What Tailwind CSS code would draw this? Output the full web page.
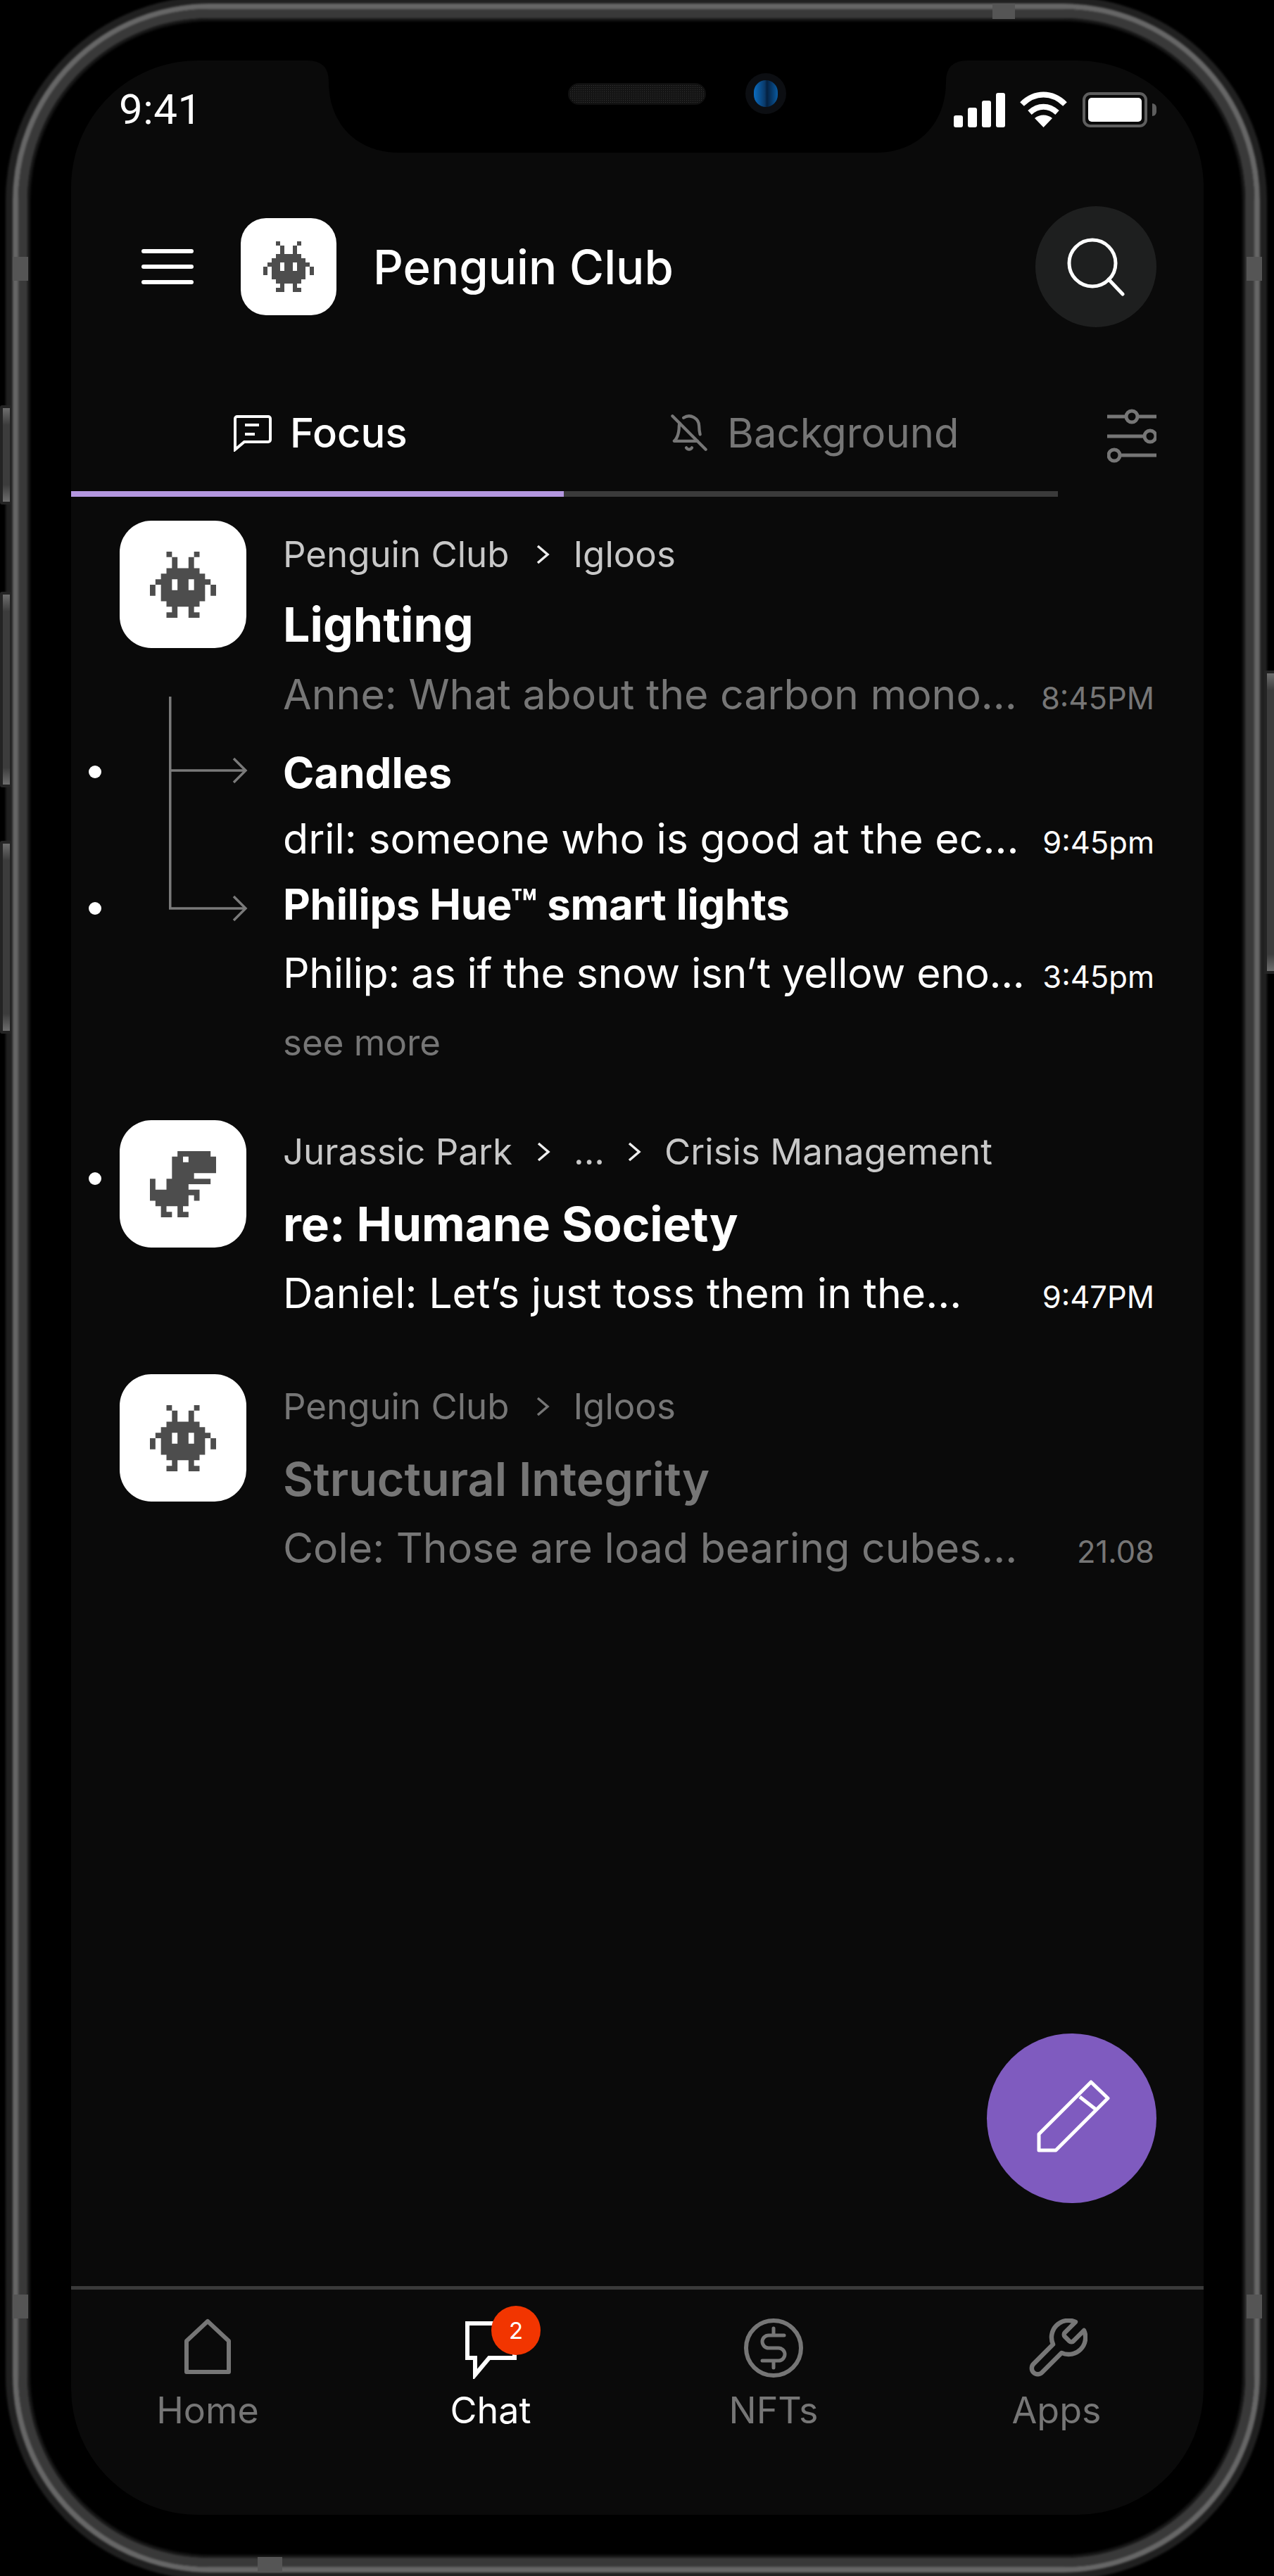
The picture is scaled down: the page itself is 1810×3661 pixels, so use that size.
<!DOCTYPE html>
<html lang="en">
<head>
  <meta charset="UTF-8">
  <title>Penguin Club</title>
  <script src="https://cdn.jsdelivr.net/npm/@tailwindcss/browser@4"></script>
</head>
<body class="bg-black">
  <!-- pixel icons -->
  <svg class="hidden">
    <symbol id="invader" viewBox="0 0 12 12">
      <path fill="#4d4d4d" d="M3 0h1v1H3zM8 0h1v1H8zM4 1h1v2H4zM7 1h1v2H7zM3 3h6v1H3zM2 4h8v1H2zM1 5h3v1H1zM5 5h2v1H5zM8 5h3v1H8zM0 6h1v2H0zM11 6h1v2h-1zM2 6h2v1H2zM5 6h2v1H5zM8 6h2v1H8zM2 7h8v1H2zM2 8h8v1H2zM3 9h6v1H3zM4 10h1v1H4zM7 10h1v1H7zM3 11h2v1H3zM7 11h2v1H7z"/>
    </symbol>
    <symbol id="dino" viewBox="0 0 12 12">
      <path fill="#4d4d4d" d="M5 0h6v1H5zM4 1h2v1H4zM7 1h5v1H7zM4 2h8v2H4zM4 4h4v1H4zM0 5h1v2H0zM3 5h8v1H3zM3 6h4v1H3zM0 7h9v1H0zM0 8h7v1H0zM8 8h1v1H8zM1 9h6v1H1zM2 10h1v1H2zM5 10h1v1H5zM2 11h2v1H2zM5 11h2v1H5z"/>
    </symbol>
  </svg>

  <div class="relative w-[1810px] h-[3661px] overflow-hidden font-['Inter',sans-serif]">

    <!-- phone frame -->
    <div class="absolute left-[8px] top-[-5px] w-[1792px] h-[3671px] rounded-[290px] border-[10px] border-[#202020] blur-[1.5px]">
      <div class="w-full h-full rounded-[280px] border-[8px] border-[#666666]">
        <div class="w-full h-full rounded-[272px] border-[13px] border-[#393939]">
          <div class="w-full h-full rounded-[259px] border-[4px] border-[#161616] bg-black"></div>
        </div>
      </div>
    </div>
    <!-- antenna bands -->
    <div class="absolute left-[1410px] top-[5px] w-[32px] h-[22px] bg-[#555555]"></div>
    <div class="absolute left-[366px] top-[3634px] w-[35px] h-[22px] bg-[#555555]"></div>
    <div class="absolute left-[18px] top-[365px] w-[22px] h-[34px] bg-[#555555]"></div>
    <div class="absolute left-[1771px] top-[365px] w-[22px] h-[34px] bg-[#555555]"></div>
    <div class="absolute left-[18px] top-[3261px] w-[22px] h-[34px] bg-[#555555]"></div>
    <div class="absolute left-[1771px] top-[3261px] w-[22px] h-[34px] bg-[#555555]"></div>
    <!-- side buttons -->
    <div class="absolute left-0 top-[576px] w-[16px] h-[141px] rounded-l-[3px] bg-[#242424] p-[4px] pr-[2px] blur-[0.5px]">
      <div class="w-full h-full bg-[linear-gradient(#6e6e6e,#3c3c3c_24px,#3c3c3c_calc(100%-24px),#6e6e6e)]"></div>
    </div>
    <div class="absolute left-0 top-[841px] w-[16px] h-[278px] rounded-l-[3px] bg-[#242424] p-[4px] pr-[2px] blur-[0.5px]">
      <div class="w-full h-full bg-[linear-gradient(#6e6e6e,#3c3c3c_24px,#3c3c3c_calc(100%-24px),#6e6e6e)]"></div>
    </div>
    <div class="absolute left-0 top-[1195px] w-[16px] h-[274px] rounded-l-[3px] bg-[#242424] p-[4px] pr-[2px] blur-[0.5px]">
      <div class="w-full h-full bg-[linear-gradient(#6e6e6e,#3c3c3c_24px,#3c3c3c_calc(100%-24px),#6e6e6e)]"></div>
    </div>
    <div class="absolute left-[1796px] top-[953px] w-[14px] h-[431px] bg-[#242424] p-[4px] pr-0 blur-[0.5px]">
      <div class="w-full h-full bg-[linear-gradient(#6e6e6e,#3c3c3c_24px,#3c3c3c_calc(100%-24px),#6e6e6e)]"></div>
    </div>

    <!-- screen -->
    <div class="absolute left-[101px] top-[86px] w-[1609px] h-[3488px] rounded-[180px] bg-[#0a0a0a] text-white flex flex-col">

      <!-- notch -->
      <svg class="absolute left-[336px] top-0" width="937" height="131" viewBox="0 0 937 131">
        <path fill="#000" d="M0 0Q30 0 30 30C30 90 70 131 130 131H807C867 131 907 90 907 30Q907 0 937 0Z"/>
      </svg>
      <div class="absolute left-[706px] top-[32px] w-[196px] h-[31px] rounded-full bg-[#141414] bg-[radial-gradient(#333333_1px,transparent_1px)] bg-size-[3px_3px] border-2 border-[#101010]"></div>
      <div class="absolute left-[958px] top-[18px] w-[58px] h-[58px] rounded-full bg-[#0c0e12] flex items-center justify-center">
        <div class="w-[34px] h-[38px] rounded-full bg-[linear-gradient(90deg,#0a6cc0,#0a3a6a_45%,#042040_55%,#0a5aa0)]"></div>
      </div>

      <!-- status bar -->
      <div class="relative h-[100px] shrink-0 flex items-start justify-between pl-[68px] pr-[67px]">
        <span class="text-[60px] leading-[72px] mt-[34px] font-['Roboto',sans-serif] tracking-[0.5px]">9:41</span>
        <div class="flex items-end mt-[44px]">
          <div class="flex items-end gap-[7px]">
            <div class="w-[13px] h-[17px] rounded-[3px] bg-white"></div>
            <div class="w-[13px] h-[28px] rounded-[3px] bg-white"></div>
            <div class="w-[13px] h-[38px] rounded-[3px] bg-white"></div>
            <div class="w-[13px] h-[49px] rounded-[3px] bg-white"></div>
          </div>
          <svg class="ml-[21px]" width="67" height="51" viewBox="0 0 67 51" fill="none" stroke="#fff" stroke-width="8">
            <path d="M3 18C21 0 46 0 64 18"/>
            <path d="M14 30C26 19 41 19 53 30"/>
            <path fill="#fff" stroke="none" d="M33.500 51L21 38C28 32 39 32 46 38Z"/>
          </svg>
          <div class="ml-[22px] w-[92px] h-[50px] rounded-[11px] border-[4px] border-[#5e5e5e] p-[4px]">
            <div class="w-full h-full rounded-[5px] bg-white"></div>
          </div>
          <div class="w-[6px] h-[18px] mb-[16px] ml-[7px] rounded-r-full bg-[#5e5e5e]"></div>
        </div>
      </div>

      <!-- app bar -->
      <div class="h-[279px] shrink-0 flex items-start pl-[100px] pr-[67px]">
        <div class="flex flex-col gap-[16px] mt-[168px] w-[74px]">
          <div class="h-[6px] rounded-full bg-white"></div>
          <div class="h-[6px] rounded-full bg-white"></div>
          <div class="h-[6px] rounded-full bg-white"></div>
        </div>
        <div class="ml-[67px] mt-[124px] w-[136px] h-[138px] rounded-[36px] bg-white flex items-center justify-center">
          <svg width="72" height="72"><use href="#invader"/></svg>
        </div>
        <div class="ml-[52px] mt-[154px] text-[67px] leading-[80px] font-[450]">Penguin Club</div>
        <div class="ml-auto mt-[107px] w-[172px] h-[172px] rounded-full bg-[#1e1f1f] flex items-center justify-center">
          <svg width="84" height="84" viewBox="0 0 84 84" fill="none" stroke="#fff" stroke-width="5" stroke-linecap="round">
            <circle cx="37" cy="37" r="33"/>
            <path d="M60 60L80 81"/>
          </svg>
        </div>
      </div>

      <!-- tabs -->
      <div class="h-[233px] shrink-0 flex items-start pr-[67px] pt-[115px]">
        <div class="w-[700px] pl-[230px] flex items-center gap-[25px]">
          <svg width="56" height="53" viewBox="0 0 56 53" fill="none" stroke="#fff" stroke-width="4">
            <path d="M3 6a3 3 0 0 1 3-3H50a3 3 0 0 1 3 3V36a3 3 0 0 1-3 3H16L3 50Z"/>
            <path d="M17 15H37M17 28H31"/>
          </svg>
          <span class="text-[58px] leading-[70px] font-[450]">Focus</span>
        </div>
        <div class="pl-[152px] flex items-center gap-[28px] text-[#767676]">
          <svg width="52" height="52" viewBox="1 1 22 22" fill="none" stroke="#767676" stroke-width="1.800" stroke-linecap="round" stroke-linejoin="round">
            <path d="M8.700 3A6 6 0 0 1 18 8a21.300 21.300 0 0 0 .6 5"/>
            <path d="M17 17H3s3-2 3-9a4.670 4.670 0 0 1 .3-1.700"/>
            <path d="M10.300 21a1.940 1.940 0 0 0 3.400 0"/>
            <path d="m2 2 20 20"/>
          </svg>
          <span class="text-[58px] leading-[70px]">Background</span>
        </div>
        <svg class="ml-auto mt-[1px]" width="70" height="78" viewBox="0 0 70 78" fill="#0a0a0a" stroke="#767676" stroke-width="5">
          <path d="M0 11H70M0 39H70M0 66H70"/>
          <circle cx="35" cy="11" r="8"/>
          <circle cx="61" cy="39" r="8"/>
          <circle cx="10" cy="66" r="8"/>
        </svg>
      </div>
      <div class="flex h-[8px] w-[1402px] shrink-0">
        <div class="w-[700px] bg-[#b497e0]"></div>
        <div class="flex-1 bg-[#3a3a3a]"></div>
      </div>

      <!-- chat list -->
      <div class="relative pt-[34px] pl-[69px] pr-[70px]">
        <!-- thread connector -->
        <svg class="absolute left-[139px] top-[284px]" width="112" height="320" viewBox="0 0 112 320" fill="none" stroke="#7a7a7a" stroke-width="3.500">
          <path d="M1.750 0V301H109"/>
          <path d="M1.750 105H109"/>
          <path d="M92 88L109 105L92 122"/>
          <path d="M92 284L109 301L92 318"/>
        </svg>
        <div class="absolute left-[25px] top-[382px] w-[18px] h-[18px] rounded-full bg-white"></div>
        <div class="absolute left-[25px] top-[576px] w-[18px] h-[18px] rounded-full bg-white"></div>
        <div class="absolute left-[25px] top-[960px] w-[18px] h-[18px] rounded-full bg-white"></div>

        <!-- Lighting -->
        <div class="flex gap-[52px]">
          <div class="w-[180px] h-[181px] shrink-0 rounded-[45px] bg-white flex items-center justify-center">
            <svg width="94" height="94"><use href="#invader"/></svg>
          </div>
          <div class="flex-1 pt-[18px]">
            <div class="flex items-center h-[60px] text-[51px] leading-[60px] text-[#c8c8c8]">
              <span>Penguin Club</span>
              <svg class="ml-[38px] mr-[33px]" width="20" height="30" viewBox="0 0 20 30" fill="none" stroke="#eeeeee" stroke-width="3.500"><path d="M3 3L17 15L3 27"/></svg>
              <span>Igloos</span>
            </div>
            <div class="mt-[29px] text-[68px] leading-[80px] font-bold">Lighting</div>
            <div class="mt-[24px] flex items-baseline justify-between text-[#767676]">
              <span class="text-[59px] leading-[72px]">Anne: What about the carbon mono...</span>
              <span class="text-[43.5px] leading-[44px]">8:45PM</span>
            </div>
            <div class="mt-[39px] text-[60px] leading-[72px] font-bold">Candles</div>
            <div class="mt-[22px] flex items-baseline justify-between">
              <span class="text-[59px] leading-[72px]">dril: someone who is good at the ec...</span>
              <span class="text-[43.5px] leading-[44px]">9:45pm</span>
            </div>
            <div class="mt-[21px] text-[60px] leading-[72px] font-bold tracking-[-0.3px]">Philips Hue™ smart lights</div>
            <div class="mt-[26px] flex items-baseline justify-between">
              <span class="text-[59px] leading-[72px] tracking-[-0.4px]">Philip: as if the snow isn’t yellow eno...</span>
              <span class="text-[43.5px] leading-[44px]">3:45pm</span>
            </div>
            <div class="mt-[33px] text-[51px] leading-[60px] text-[#767676]">see more</div>
          </div>
        </div>

        <!-- re: Humane Society -->
        <div class="mt-[80px] flex gap-[52px]">
          <div class="w-[180px] h-[181px] shrink-0 rounded-[45px] bg-white flex items-center justify-center">
            <svg width="94" height="94"><use href="#dino"/></svg>
          </div>
          <div class="flex-1 pt-[15px]">
            <div class="flex items-center h-[60px] text-[51px] leading-[60px] text-[#c8c8c8]">
              <span>Jurassic Park</span>
              <svg class="ml-[34px] mr-[33px]" width="20" height="30" viewBox="0 0 20 30" fill="none" stroke="#eeeeee" stroke-width="3.500"><path d="M3 3L17 15L3 27"/></svg>
              <span>...</span>
              <svg class="ml-[32px] mr-[33px]" width="20" height="30" viewBox="0 0 20 30" fill="none" stroke="#eeeeee" stroke-width="3.500"><path d="M3 3L17 15L3 27"/></svg>
              <span>Crisis Management</span>
            </div>
            <div class="mt-[33px] text-[67.500px] leading-[80px] font-bold">re: Humane Society</div>
            <div class="mt-[22px] flex items-baseline justify-between">
              <span class="text-[59px] leading-[72px]">Daniel: Let’s just toss them in the...</span>
              <span class="text-[43.5px] leading-[44px]">9:47PM</span>
            </div>
          </div>
        </div>

        <!-- Structural Integrity -->
        <div class="mt-[79px] flex gap-[52px]">
          <div class="w-[180px] h-[181px] shrink-0 rounded-[45px] bg-white flex items-center justify-center">
            <svg width="94" height="94"><use href="#invader"/></svg>
          </div>
          <div class="flex-1 pt-[16px] text-[#767676]">
            <div class="flex items-center h-[60px] text-[51px] leading-[60px]">
              <span>Penguin Club</span>
              <svg class="ml-[38px] mr-[33px]" width="20" height="30" viewBox="0 0 20 30" fill="none" stroke="#767676" stroke-width="3.500"><path d="M3 3L17 15L3 27"/></svg>
              <span>Igloos</span>
            </div>
            <div class="mt-[33px] text-[66.500px] leading-[80px] font-semibold">Structural Integrity</div>
            <div class="mt-[22px] flex items-baseline justify-between">
              <span class="text-[59px] leading-[72px]">Cole: Those are load bearing cubes...</span>
              <span class="text-[43.5px] leading-[44px]">21.08</span>
            </div>
          </div>
        </div>
      </div>

      <!-- compose button -->
      <div class="absolute left-[1301px] top-[2804px] w-[241px] h-[241px] rounded-full bg-[#7f5bbf]">
        <svg width="241" height="241" viewBox="0 0 241 241" fill="none" stroke="#fff" stroke-width="5" stroke-linejoin="round">
          <path d="M74 143V166H98L172 92L148 69Z"/>
          <path d="M132 90L155 108"/>
        </svg>
      </div>

      <!-- bottom nav -->
      <div class="mt-auto h-[325px] shrink-0 border-t-[5px] border-[#3a3a3a]">
        <div class="grid grid-cols-4 w-[1608px] ml-[-7px] pt-[41px] text-[52px] leading-[60px] text-[#767676]">
          <div class="flex flex-col items-center">
            <div class="h-[86px]">
              <svg width="66" height="79" viewBox="0 0 66 79" fill="none" stroke="#767676" stroke-width="6" stroke-linejoin="round">
                <path d="M33 4L63 32V76H3V32Z"/>
              </svg>
            </div>
            <span class="mt-[15px]">Home</span>
          </div>
          <div class="flex flex-col items-center text-white">
            <div class="relative w-[80px] h-[86px]">
              <svg width="80" height="86" viewBox="0 0 80 86" fill="none" stroke="#fff" stroke-width="6">
                <path d="M7 7H74V56H38L18 80V56H7Z"/>
              </svg>
              <div class="absolute left-[41px] top-[-18px] w-[70px] h-[70px] rounded-full bg-[#f23500] flex items-center justify-center text-[33px] leading-none">2</div>
            </div>
            <span class="mt-[15px]">Chat</span>
          </div>
          <div class="flex flex-col items-center">
            <div class="h-[86px]">
              <svg width="84" height="84" viewBox="0 0 84 84" fill="none" stroke="#767676" stroke-width="6">
                <circle cx="42" cy="42" r="39"/>
                <path stroke-width="5" stroke-linecap="round" d="M57 24H35a9 9 0 0 0 0 18h14a9 9 0 0 1 0 18H26M42 14V24M42 60V70"/>
              </svg>
            </div>
            <span class="mt-[15px]">NFTs</span>
          </div>
          <div class="flex flex-col items-center">
            <div class="h-[86px] pl-[2px]">
              <svg width="86" height="86" viewBox="1.300 1.300 21.400 21.400" fill="none" stroke="#767676" stroke-width="1.600" stroke-linecap="round" stroke-linejoin="round">
                <path d="M14.700 6.300a1 1 0 0 0 0 1.400l1.600 1.600a1 1 0 0 0 1.400 0l3.770-3.770a6 6 0 0 1-7.940 7.940l-6.910 6.910a2.120 2.120 0 0 1-3-3l6.910-6.910a6 6 0 0 1 7.940-7.940l-3.760 3.760z"/>
              </svg>
            </div>
            <span class="mt-[15px]">Apps</span>
          </div>
        </div>
      </div>
    </div>
  </div>
</body>
</html>
